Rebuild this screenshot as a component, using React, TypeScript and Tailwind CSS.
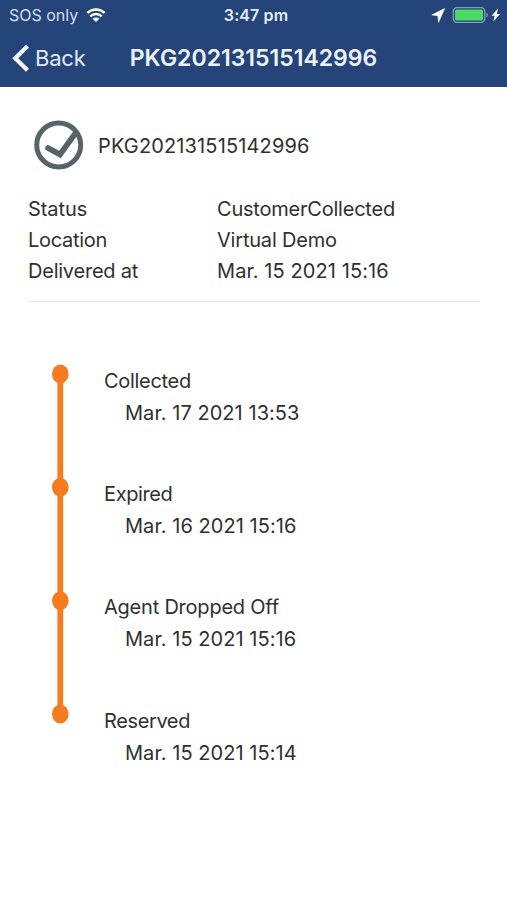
import React from "react";

interface DetailProps {
  label: string;
  value: string;
  labelClass: string;
  valueClass: string;
}

interface TimelineEvent {
  title: string;
  time: string;
  titleClass: string;
}

const details: DetailProps[] = [
  {
    label: "Status",
    value: "CustomerCollected",
    labelClass: "tracking-[-0.05px]",
    valueClass: "tracking-[-0.22px]",
  },
  {
    label: "Location",
    value: "Virtual Demo",
    labelClass: "tracking-[-0.3px]",
    valueClass: "tracking-[-0.2px]",
  },
  {
    label: "Delivered at",
    value: "Mar. 15 2021 15:16",
    labelClass: "tracking-[-0.23px]",
    valueClass: "tracking-[0.08px]",
  },
];

const events: TimelineEvent[] = [
  {
    title: "Collected",
    time: "Mar. 17 2021 13:53",
    titleClass: "tracking-[-0.3px]",
  },
  {
    title: "Expired",
    time: "Mar. 16 2021 15:16",
    titleClass: "tracking-[-0.38px]",
  },
  {
    title: "Agent Dropped Off",
    time: "Mar. 15 2021 15:16",
    titleClass: "tracking-[-0.22px]",
  },
  {
    title: "Reserved",
    time: "Mar. 15 2021 15:14",
    titleClass: "tracking-[-0.38px]",
  },
];

function StatusBar() {
  return (
    <div className="grid h-[30px] grid-cols-3 items-center pl-[9px] pr-[6px]">
      <div className="flex items-center gap-[8px]">
        <span className="text-[16px] text-[#d5deee]">SOS only</span>
        <svg width="20" height="15" viewBox="0 0 20 15" fill="none">
          <path d="M1.4 4.9C6.2.3 13.8.3 18.6 4.9" stroke="#fff" strokeWidth="2.6" />
          <path d="M4.3 8.3c3.2-3 8.2-3 11.4 0" stroke="#fff" strokeWidth="2.5" />
          <path d="M10 13.9 6.6 10.7c1.9-1.7 4.9-1.7 6.8 0Z" fill="#fff" />
        </svg>
      </div>
      <span className="pl-[2px] text-center text-[16px] font-semibold tracking-[0.1px] text-[#e4ebf7]">
        3:47 pm
      </span>
      <div className="flex items-center justify-end">
        <svg width="70" height="18" viewBox="0 0 70 18" fill="none">
          <path
            d="M13.6 2.6.8 8.9l6 .8.8 6.6Z"
            fill="#fff"
            stroke="#fff"
            strokeWidth="0.6"
            strokeLinejoin="round"
          />
          <rect x="22.3" y="1.7" width="31.4" height="14.6" rx="3.6" stroke="#8c9dbd" strokeWidth="1.3" />
          <rect x="24" y="3.5" width="28" height="11" rx="1.5" fill="#4cd964" />
          <path d="M55.4 6.6c1.8.6 1.8 4.4 0 5Z" fill="#8c9dbd" />
          <path d="m67 2.6-6.4 7.2h3l-1.2 5.8 6.6-7.600h-3.200Z" fill="#fff" />
        </svg>
      </div>
    </div>
  );
}

function NavBar() {
  return (
    <div className="grid h-[57px] grid-cols-[124px_1fr_124px] items-center">
      <button type="button" className="flex items-center gap-[5px] pl-[12px] text-[#e4ebf7]">
        <svg width="18" height="30" viewBox="0 0 18 30" fill="none">
          <path d="M15.5 2.3 3.2 14.3l12.3 12" stroke="#fff" strokeWidth="4.2" />
        </svg>
        <span className="text-[22px] tracking-[-0.2px]">Back</span>
      </button>
      <h1 className="flex justify-center text-[23px] font-semibold whitespace-nowrap text-[#eef3fb]">
        PKG202131515142996
      </h1>
    </div>
  );
}

function DetailRow({ label, value, labelClass, valueClass }: DetailProps) {
  return (
    <div className="flex h-[31px] items-center">
      <dt className="w-[189px]">
        <span className={labelClass}>{label}</span>
      </dt>
      <dd>
        <span className={valueClass}>{value}</span>
      </dd>
    </div>
  );
}

function Timeline() {
  return (
    <div className="mt-[62px] flex pl-[51px]">
      <svg width="19" height="360" viewBox="0 0 19 360" fill="#f47b20">
        <rect x="6.4" y="10" width="5.8" height="340" />
        <ellipse cx="9.3" cy="10" rx="8.3" ry="9.5" />
        <ellipse cx="9.3" cy="123.3" rx="8.3" ry="9.5" />
        <ellipse cx="9.3" cy="236.7" rx="8.3" ry="9.5" />
        <ellipse cx="9.3" cy="350" rx="8.3" ry="9.5" />
      </svg>
      <ul className="ml-[34px] pt-[0.7px]">
        {events.map((event) => (
          <li key={event.title} className="h-[113.3px] leading-8">
            <p className={event.titleClass}>{event.title}</p>
            <p className="pl-[21px] tracking-[0.05px]">{event.time}</p>
          </li>
        ))}
      </ul>
    </div>
  );
}

export default function App() {
  return (
    <div className="min-h-screen w-full bg-white font-['Inter',sans-serif] text-[20px] text-[#303030]">
      <header className="h-[87px] bg-[#25457a]">
        <StatusBar />
        <NavBar />
      </header>

      <main>
        <div className="flex items-center gap-[14px] pt-[33px] pl-[33px]">
          <svg width="51" height="51" viewBox="0 0 51 51" fill="none" stroke="#566369">
            <circle cx="25.7" cy="25" r="22" strokeWidth="5" />
            <path d="m15 28 12 6.500L41.500 14.500" strokeWidth="5.600" strokeLinecap="round" />
          </svg>
          <span className="tracking-[0.14px]">PKG202131515142996</span>
        </div>

        <dl className="mr-[27px] ml-[28px] mt-[22px] border-b border-[#e8e8e8] pb-[15px]">
          {details.map((detail) => (
            <DetailRow key={detail.label} {...detail} />
          ))}
        </dl>

        <Timeline />
      </main>
    </div>
  );
}
